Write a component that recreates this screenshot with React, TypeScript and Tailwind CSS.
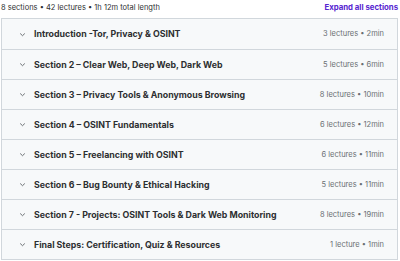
const sections = [
  { title: 'Introduction -Tor, Privacy & OSINT', meta: '3 lectures • 2min' },
  { title: 'Section 2 – Clear Web, Deep Web, Dark Web', meta: '5 lectures • 6min' },
  { title: 'Section 3 – Privacy Tools & Anonymous Browsing', meta: '8 lectures • 10min' },
  { title: 'Section 4 – OSINT Fundamentals', meta: '6 lectures • 12min' },
  { title: 'Section 5 – Freelancing with OSINT', meta: '6 lectures • 11min' },
  { title: 'Section 6 – Bug Bounty & Ethical Hacking', meta: '5 lectures • 11min' },
  { title: 'Section 7 - Projects: OSINT Tools & Dark Web Monitoring', meta: '8 lectures • 19min' },
  { title: 'Final Steps: Certification, Quiz & Resources', meta: '1 lecture • 1min' },
]

function Chevron() {
  return (
    <svg width="7" height="7" viewBox="0 0 7 7" fill="none" className="shrink-0">
      <path d="M1.2 2.5l2.3 2.2L5.8 2.5" stroke="#6a6f73" strokeWidth="1" />
    </svg>
  )
}

export default function App() {
  return (
    <div className="h-[261px] w-[400px] overflow-hidden bg-white font-['Inter',sans-serif] text-[#2d2f31]">
      <div className="flex h-[18px] items-center justify-between pb-[2px] pl-[1px] pr-[2px]">
        <span className="text-[7.5px] text-[#2d2f31]">8 sections • 42 lectures • 1h 12m total length</span>
        <span className="text-[7.8px] font-bold text-[#5624d0]">Expand all sections</span>
      </div>
      <div className="ml-[1px] mr-[2px] border border-[#d1d7dc]">
        {sections.map((s, i) => (
          <div
            key={s.title}
            className={`flex h-[30px] items-center bg-[#f7f9fa] pl-[17px] pr-[13px] ${i > 0 ? 'border-t border-[#d1d7dc]' : ''}`}
          >
            <Chevron />
            <span className="ml-[8px] flex-1 text-[8.8px] font-bold">{s.title}</span>
            <span className="text-[7.5px] text-[#6a6f73]">{s.meta}</span>
          </div>
        ))}
      </div>
    </div>
  )
}
